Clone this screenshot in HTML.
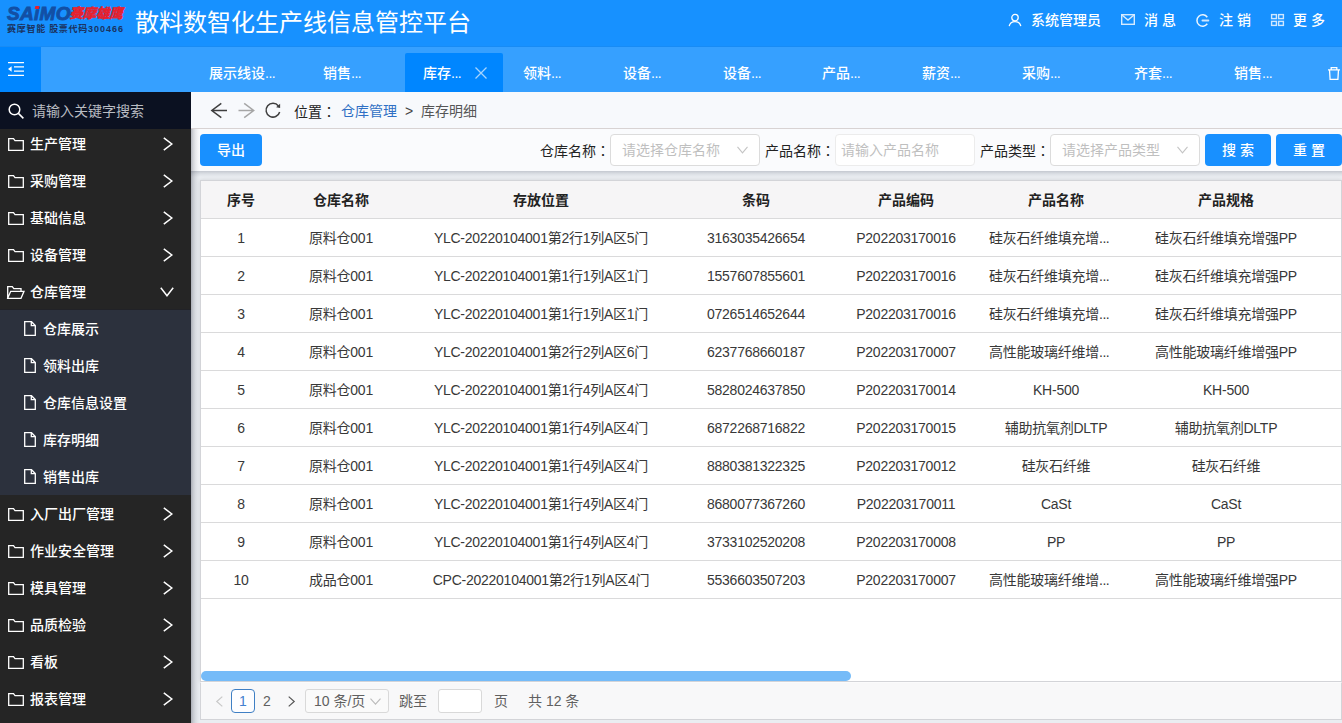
<!DOCTYPE html>
<html lang="zh-CN"><head><meta charset="utf-8"><title>散料数智化生产线信息管控平台</title>
<style>
*{box-sizing:border-box;margin:0;padding:0}
html,body{width:1342px;height:723px;overflow:hidden;background:#eaedf1;font-family:"Liberation Sans","Noto Sans CJK SC",sans-serif;font-size:14px;color:#222}
.abs{position:absolute}
body>div{position:absolute}
svg{position:absolute;overflow:visible}
.t{position:absolute;white-space:nowrap;line-height:20px;height:20px}
/* header */
#hdr{left:0;top:0;width:1342px;height:46px;background:#1791ff}
#hdr #title{left:135px;top:5.500px;font-size:24px;line-height:34px;height:34px;color:#fff}
#hdr .t{color:#fff;top:10px}
/* tab bar */
#tabs{left:0;top:46px;width:1342px;height:46px;background:#36a0ff;box-shadow:inset 0 1px 0 #188bf4}
#tog{left:0;top:1px;width:41px;height:45px;background:#0086ff;position:absolute}
#tabs .t{color:#fff;top:17px}
#act{position:absolute;left:405px;top:7px;width:98px;height:39px;background:#0086ff;border-radius:2px 2px 0 0}
/* sidebar */
#side{left:0;top:92px;width:191px;height:631px;background:#252525;overflow:hidden}
#sub{position:absolute;left:0;top:217px;width:191px;height:186px;background:#2c313d;border-top:1px solid #212227}
#srch{position:absolute;left:0;top:0;width:191px;height:37px;background:#0c1421}
#side .t{color:#fff}
#side .m{left:30px}
#side .s{left:43px}
/* main */
#crumb{left:191px;top:92px;width:1151px;height:37px;background:#f7f9fc;border-bottom:1px solid #d8d3d3}
#bar{left:191px;top:129px;width:1151px;height:42px;background:#fafbfd}
.btn{position:absolute;background:#1890ff;color:#fff;border-radius:4px;height:32px;line-height:32px;text-align:center;top:5px;white-space:nowrap}
.sel{position:absolute;top:5px;height:32px;background:#fff;border:1px solid #dcdcdc;border-radius:4px;color:#bfbfbf;line-height:30px;white-space:nowrap}
/* table */
.tbl{left:200px;top:180px;width:1142px;height:502px;background:#fff;border:1px solid #d3d4d8;position:absolute;box-shadow:0 0 4px rgba(0,0,0,.1)}
.thead{position:absolute;left:0;top:0;width:1140px;height:38px;background:#f6f5f6;border-bottom:1px solid #dadadb}
.th{position:absolute;top:0;height:38px;line-height:39px;text-align:center;font-weight:bold;color:#222;white-space:nowrap}
.tr{position:absolute;left:0;width:1140px;height:38px;border-bottom:1px solid #dadadb}
.td{position:absolute;top:0;height:38px;line-height:39px;text-align:center;color:#383838;white-space:nowrap}
/* footer */
#sb{left:201px;top:671px;width:650px;height:10px;border-radius:5px;background:#75bbf8}
#pg{left:200px;top:682px;width:1142px;height:38px;background:#f8f8f9;border:1px solid #d3d4d8;border-top-color:#fbfbfc}
#pg .t{top:8px;color:#606060}
.tc{font-family:"Noto Sans CJK TC","Noto Sans CJK SC",sans-serif}
.td{letter-spacing:-0.25px}
#hdr .t,#tabs .t,#side .t,.btn{font-weight:500}
#srch{background:#0b1121}
#hdr #title,#srch .t{font-weight:400}
.d{letter-spacing:-0.5px}

</style></head>
<body>
<div id="hdr">
  <div class="t" id="logo1" style="left:7px;top:3.700px;height:20px;line-height:20px;font-size:19px;font-weight:bold;font-style:italic;color:#124fa5;-webkit-text-stroke:0.9px #124fa5;letter-spacing:0.3px">SAiMO</div><div id="idot" style="position:absolute;left:35.200px;top:6px;width:4px;height:3.400px;background:#e8202c;transform:skewX(-12deg)"></div>
  <div class="t" id="logo2" style="left:69.500px;top:5px;height:18px;line-height:18px;font-size:13.400px;font-weight:900;font-style:italic;color:#e8202c;-webkit-text-stroke:0.4px #e8202c;letter-spacing:-0.1px">赛摩雄鹰</div>
  <div class="t" id="logo3" style="left:7px;top:23px;height:24px;line-height:24px;font-size:18px;font-weight:bold;color:#1b3360;letter-spacing:1.450px;transform:scale(.5);transform-origin:0 0">赛摩智能 股票代码<span style="letter-spacing:2px">300466</span></div>
  <div class="t" id="title">散料数智化生产线信息管控平台</div>
  <svg style="left:1008px;top:13px" width="14" height="14" viewBox="0 0 14 14" fill="none" stroke="#fff" stroke-width="1.3"><circle cx="7" cy="4.6" r="3.2"/><path d="M1.2 13.2c.6-3 2.9-4.6 5.800-4.600s5.200 1.600 5.800 4.600"/></svg>
  <div class="t" style="left:1031px">系统管理员</div>
  <svg style="left:1121px;top:14px" width="14" height="11" viewBox="0 0 14 11" fill="none" stroke="#d6ebff" stroke-width="1.400"><rect x=".7" y=".7" width="12.600" height="9.600"/><path d="M1 1l6 5 6-5"/></svg>
  <div class="t" style="left:1144px">消 息</div>
  <svg style="left:1196px;top:13.500px" width="13" height="13" viewBox="0 0 13 13" fill="none" stroke="#eaf5ff" stroke-width="1.500"><path d="M11.300 3.200a5.700 5.700 0 1 0 0 6.600"/><path d="M6.500 6.500h5.800" stroke="#cfe7ff" stroke-width="2" stroke-linecap="round"/></svg>
  <div class="t" style="left:1219px">注 销</div>
  <svg style="left:1271px;top:14px" width="13" height="12" viewBox="0 0 13 12" fill="none" stroke="#cfe7ff" stroke-width="1.400"><rect x=".6" y=".6" width="4.800" height="4"/><rect x="7.600" y=".6" width="4.800" height="4"/><rect x=".6" y="7.400" width="4.800" height="4"/><rect x="7.600" y="7.400" width="4.800" height="4"/></svg>
  <div class="t" style="left:1293px">更 多</div>
</div>
<div id="tabs">
  <div id="tog"><svg style="left:8px;top:15px" width="16" height="14" viewBox="0 0 16 14" fill="none" stroke="#fff" stroke-width="1.300"><path d="M0 .7h16M6 4.900h10M6 9.100h10M0 13.300h16"/><path d="M3.600 4.200v5.600L0 7z" fill="#fff" stroke="none"/></svg></div>
  <div id="act"></div>
  <div class="t" style="left:209px">展示线设<span class="d">...</span></div>
  <div class="t" style="left:323px">销售<span class="d">...</span></div>
  <div class="t" style="left:423px">库存<span class="d">...</span></div>
  <svg style="left:475px;top:21px" width="12" height="12" viewBox="0 0 12 12" fill="none" stroke="#a6d4ff" stroke-width="1.300"><path d="M.5.500l11 11M11.500.500l-11 11"/></svg>
  <div class="t" style="left:523px">领料<span class="d">...</span></div>
  <div class="t" style="left:623px">设备<span class="d">...</span></div>
  <div class="t" style="left:723px">设备<span class="d">...</span></div>
  <div class="t" style="left:822px">产品<span class="d">...</span></div>
  <div class="t" style="left:922px">薪资<span class="d">...</span></div>
  <div class="t" style="left:1022px">采购<span class="d">...</span></div>
  <div class="t" style="left:1134px">齐套<span class="d">...</span></div>
  <div class="t" style="left:1234px">销售<span class="d">...</span></div>
  <svg style="left:1328px;top:21px" width="12" height="13" viewBox="0 0 12 13" fill="none" stroke="#fff" stroke-width="1.300"><path d="M0 2.800h12M3.200 2.800v-2.100h5.600v2.100M1.500 2.800l.6 9.500h7.800l.6-9.500"/></svg>
</div>
<div id="side">
<div id="sub"></div>
<svg style="left:8px;top:46px" width="16" height="13" viewBox="0 0 16 13" fill="none" stroke="#fff" stroke-width="1.300"><path d="M.7 12.300v-11.600h4.800l1.500 2h8.300v9.600z"/></svg>
<svg style="left:163px;top:45px" width="10" height="14" viewBox="0 0 10 14" fill="none" stroke="#fff" stroke-width="1.500"><path d="M.8.800l8 6.200-8 6.200"/></svg>
<div class="t m" style="top:42px">生产管理</div>
<svg style="left:8px;top:83px" width="16" height="13" viewBox="0 0 16 13" fill="none" stroke="#fff" stroke-width="1.300"><path d="M.7 12.300v-11.600h4.800l1.500 2h8.300v9.600z"/></svg>
<svg style="left:163px;top:82px" width="10" height="14" viewBox="0 0 10 14" fill="none" stroke="#fff" stroke-width="1.500"><path d="M.8.800l8 6.200-8 6.200"/></svg>
<div class="t m" style="top:79px">采购管理</div>
<svg style="left:8px;top:120px" width="16" height="13" viewBox="0 0 16 13" fill="none" stroke="#fff" stroke-width="1.300"><path d="M.7 12.300v-11.600h4.800l1.500 2h8.300v9.600z"/></svg>
<svg style="left:163px;top:119px" width="10" height="14" viewBox="0 0 10 14" fill="none" stroke="#fff" stroke-width="1.500"><path d="M.8.800l8 6.200-8 6.200"/></svg>
<div class="t m" style="top:116px">基础信息</div>
<svg style="left:8px;top:157px" width="16" height="13" viewBox="0 0 16 13" fill="none" stroke="#fff" stroke-width="1.300"><path d="M.7 12.300v-11.600h4.800l1.500 2h8.300v9.600z"/></svg>
<svg style="left:163px;top:156px" width="10" height="14" viewBox="0 0 10 14" fill="none" stroke="#fff" stroke-width="1.500"><path d="M.8.800l8 6.200-8 6.200"/></svg>
<div class="t m" style="top:153px">设备管理</div>
<svg style="left:7px;top:194px" width="18" height="13" viewBox="0 0 18 13" fill="none" stroke="#fff" stroke-width="1.300"><path d="M.7 12.300v-11.600h4.600l1.500 2h7.200v2.600M.7 12.300l3-7h13.300l-3 7z"/></svg>
<svg style="left:160px;top:195px" width="14" height="10" viewBox="0 0 14 10" fill="none" stroke="#fff" stroke-width="1.500"><path d="M.8.800l6.200 8 6.200-8"/></svg>
<div class="t m" style="top:190px">仓库管理</div>
<svg style="left:24px;top:229px" width="12" height="15" viewBox="0 0 12 15" fill="none" stroke="#fff" stroke-width="1.300"><path d="M.7.700h6.800l3.800 3.800v9.800h-10.600z"/><path d="M7.300.900v3.800h3.800"/></svg>
<div class="t s" style="top:227px">仓库展示</div>
<svg style="left:24px;top:266px" width="12" height="15" viewBox="0 0 12 15" fill="none" stroke="#fff" stroke-width="1.300"><path d="M.7.700h6.800l3.800 3.800v9.800h-10.600z"/><path d="M7.300.900v3.800h3.800"/></svg>
<div class="t s" style="top:264px">领料出库</div>
<svg style="left:24px;top:303px" width="12" height="15" viewBox="0 0 12 15" fill="none" stroke="#fff" stroke-width="1.300"><path d="M.7.700h6.800l3.800 3.800v9.800h-10.600z"/><path d="M7.300.900v3.800h3.800"/></svg>
<div class="t s" style="top:301px">仓库信息设置</div>
<svg style="left:24px;top:340px" width="12" height="15" viewBox="0 0 12 15" fill="none" stroke="#fff" stroke-width="1.300"><path d="M.7.700h6.800l3.800 3.800v9.800h-10.600z"/><path d="M7.300.900v3.800h3.800"/></svg>
<div class="t s" style="top:338px">库存明细</div>
<svg style="left:24px;top:377px" width="12" height="15" viewBox="0 0 12 15" fill="none" stroke="#fff" stroke-width="1.300"><path d="M.7.700h6.800l3.800 3.800v9.800h-10.600z"/><path d="M7.300.900v3.800h3.800"/></svg>
<div class="t s" style="top:375px">销售出库</div>
<svg style="left:8px;top:416px" width="16" height="13" viewBox="0 0 16 13" fill="none" stroke="#fff" stroke-width="1.300"><path d="M.7 12.300v-11.600h4.800l1.500 2h8.300v9.600z"/></svg>
<svg style="left:163px;top:415px" width="10" height="14" viewBox="0 0 10 14" fill="none" stroke="#fff" stroke-width="1.500"><path d="M.8.800l8 6.200-8 6.200"/></svg>
<div class="t m" style="top:412px">入厂出厂管理</div>
<svg style="left:8px;top:453px" width="16" height="13" viewBox="0 0 16 13" fill="none" stroke="#fff" stroke-width="1.300"><path d="M.7 12.300v-11.600h4.800l1.500 2h8.300v9.600z"/></svg>
<svg style="left:163px;top:452px" width="10" height="14" viewBox="0 0 10 14" fill="none" stroke="#fff" stroke-width="1.500"><path d="M.8.800l8 6.200-8 6.200"/></svg>
<div class="t m" style="top:449px">作业安全管理</div>
<svg style="left:8px;top:490px" width="16" height="13" viewBox="0 0 16 13" fill="none" stroke="#fff" stroke-width="1.300"><path d="M.7 12.300v-11.600h4.800l1.500 2h8.300v9.600z"/></svg>
<svg style="left:163px;top:489px" width="10" height="14" viewBox="0 0 10 14" fill="none" stroke="#fff" stroke-width="1.500"><path d="M.8.800l8 6.200-8 6.200"/></svg>
<div class="t m" style="top:486px">模具管理</div>
<svg style="left:8px;top:527px" width="16" height="13" viewBox="0 0 16 13" fill="none" stroke="#fff" stroke-width="1.300"><path d="M.7 12.300v-11.600h4.800l1.500 2h8.300v9.600z"/></svg>
<svg style="left:163px;top:526px" width="10" height="14" viewBox="0 0 10 14" fill="none" stroke="#fff" stroke-width="1.500"><path d="M.8.800l8 6.200-8 6.200"/></svg>
<div class="t m" style="top:523px">品质检验</div>
<svg style="left:8px;top:564px" width="16" height="13" viewBox="0 0 16 13" fill="none" stroke="#fff" stroke-width="1.300"><path d="M.7 12.300v-11.600h4.800l1.500 2h8.300v9.600z"/></svg>
<svg style="left:163px;top:563px" width="10" height="14" viewBox="0 0 10 14" fill="none" stroke="#fff" stroke-width="1.500"><path d="M.8.800l8 6.200-8 6.200"/></svg>
<div class="t m" style="top:560px">看板</div>
<svg style="left:8px;top:601px" width="16" height="13" viewBox="0 0 16 13" fill="none" stroke="#fff" stroke-width="1.300"><path d="M.7 12.300v-11.600h4.800l1.500 2h8.300v9.600z"/></svg>
<svg style="left:163px;top:600px" width="10" height="14" viewBox="0 0 10 14" fill="none" stroke="#fff" stroke-width="1.500"><path d="M.8.800l8 6.200-8 6.200"/></svg>
<div class="t m" style="top:597px">报表管理</div>
<div id="srch"><svg style="left:8px;top:11px" width="16" height="16" viewBox="0 0 16 16" fill="none" stroke="#fff" stroke-width="1.500"><circle cx="6.500" cy="6.500" r="5.300"/><path d="M10.400 10.400l5 5"/></svg><div class="t" style="left:32px;top:9px;color:#b9bcc2">请输入关键字搜索</div></div>
</div>
<div id="crumb">
  <svg style="left:19.800px;top:11px" width="17" height="15" viewBox="0 0 17 15" fill="none" stroke="#3e3e3e" stroke-width="1.500"><path d="M16 7.500h-15.200M10.300 .4l-9.500 7.100 9.500 7.100"/></svg>
  <svg style="left:47.300px;top:11px" width="17" height="15" viewBox="0 0 17 15" fill="none" stroke="#a6a6a6" stroke-width="1.500"><path d="M.5 7.500h15.200M6.200 .4l9.500 7.100-9.500 7.100"/></svg>
  <svg style="left:74px;top:10px" width="16" height="16" viewBox="0 0 16 16" fill="none" stroke="#3e3e3e" stroke-width="1.500"><path d="M13.440 3.950A6.900 6.900 0 1 0 14.660 9.990"/><path d="M15.100 1.800v4.300l-4-.8z" fill="#3e3e3e" stroke="none"/></svg>
  <div class="t" style="left:103px;top:9px;color:#222">位置<span class="tc" lang="zh-TW">：</span></div>
  <div class="t" style="left:150px;top:9px;color:#2f6fc4">仓库管理</div>
  <div class="t" style="left:214px;top:9px;color:#444">&gt;</div>
  <div class="t" style="left:230px;top:9px;color:#555">库存明细</div>
</div>
<div id="bar">
  <div class="btn" style="left:9px;width:62px">导出</div>
  <div class="t" style="left:349px;top:11px">仓库名称<span class="tc" lang="zh-TW">：</span></div>
  <div class="sel" style="left:419px;width:150px;padding-left:11px">请选择仓库名称<svg style="left:126px;top:11px" width="11" height="8" viewBox="0 0 11 8" fill="none" stroke="#c4c4c4" stroke-width="1.100"><path d="M.5.800l5 6 5-6"/></svg></div>
  <div class="t" style="left:574px;top:11px">产品名称<span class="tc" lang="zh-TW">：</span></div>
  <div class="sel" style="left:644px;width:140px;padding-left:5px;border-color:#ececec">请输入产品名称</div>
  <div class="t" style="left:789px;top:11px">产品类型<span class="tc" lang="zh-TW">：</span></div>
  <div class="sel" style="left:859px;width:150px;padding-left:11px">请选择产品类型<svg style="left:126px;top:11px" width="11" height="8" viewBox="0 0 11 8" fill="none" stroke="#c4c4c4" stroke-width="1.100"><path d="M.5.800l5 6 5-6"/></svg></div>
  <div class="btn" style="left:1014px;width:66px">搜 索</div>
  <div class="btn" style="left:1085px;width:66px">重 置</div>
</div>
<div id="shadowh" style="left:191px;top:171px;width:1151px;height:6px;background:linear-gradient(180deg,rgba(60,70,90,.22),rgba(60,70,90,.08) 50%,rgba(60,70,90,0))"></div>
<div class="tbl">
<div class="thead">
<div class="th" style="left:0px;width:80px">序号</div>
<div class="th" style="left:80px;width:120px">仓库名称</div>
<div class="th" style="left:200px;width:280px">存放位置</div>
<div class="th" style="left:480px;width:150px">条码</div>
<div class="th" style="left:630px;width:150px">产品编码</div>
<div class="th" style="left:780px;width:150px">产品名称</div>
<div class="th" style="left:930px;width:190px">产品规格</div>
</div>
<div class="tr" style="top:38px">
<div class="td c0" style="left:0px;width:80px">1</div>
<div class="td c1" style="left:80px;width:120px">原料仓001</div>
<div class="td c2" style="left:200px;width:280px">YLC-20220104001第2行1列A区5门</div>
<div class="td c3" style="left:480px;width:150px">3163035426654</div>
<div class="td c4" style="left:630px;width:150px">P202203170016</div>
<div class="td c5" style="left:780px;width:150px;text-align:left;padding-left:8px">硅灰石纤维填充增<span class="d">...</span></div>
<div class="td c6" style="left:930px;width:190px">硅灰石纤维填充增强PP</div>
</div>
<div class="tr" style="top:76px">
<div class="td c0" style="left:0px;width:80px">2</div>
<div class="td c1" style="left:80px;width:120px">原料仓001</div>
<div class="td c2" style="left:200px;width:280px">YLC-20220104001第1行1列A区1门</div>
<div class="td c3" style="left:480px;width:150px">1557607855601</div>
<div class="td c4" style="left:630px;width:150px">P202203170016</div>
<div class="td c5" style="left:780px;width:150px;text-align:left;padding-left:8px">硅灰石纤维填充增<span class="d">...</span></div>
<div class="td c6" style="left:930px;width:190px">硅灰石纤维填充增强PP</div>
</div>
<div class="tr" style="top:114px">
<div class="td c0" style="left:0px;width:80px">3</div>
<div class="td c1" style="left:80px;width:120px">原料仓001</div>
<div class="td c2" style="left:200px;width:280px">YLC-20220104001第1行1列A区1门</div>
<div class="td c3" style="left:480px;width:150px">0726514652644</div>
<div class="td c4" style="left:630px;width:150px">P202203170016</div>
<div class="td c5" style="left:780px;width:150px;text-align:left;padding-left:8px">硅灰石纤维填充增<span class="d">...</span></div>
<div class="td c6" style="left:930px;width:190px">硅灰石纤维填充增强PP</div>
</div>
<div class="tr" style="top:152px">
<div class="td c0" style="left:0px;width:80px">4</div>
<div class="td c1" style="left:80px;width:120px">原料仓001</div>
<div class="td c2" style="left:200px;width:280px">YLC-20220104001第2行2列A区6门</div>
<div class="td c3" style="left:480px;width:150px">6237768660187</div>
<div class="td c4" style="left:630px;width:150px">P202203170007</div>
<div class="td c5" style="left:780px;width:150px;text-align:left;padding-left:8px">高性能玻璃纤维增<span class="d">...</span></div>
<div class="td c6" style="left:930px;width:190px">高性能玻璃纤维增强PP</div>
</div>
<div class="tr" style="top:190px">
<div class="td c0" style="left:0px;width:80px">5</div>
<div class="td c1" style="left:80px;width:120px">原料仓001</div>
<div class="td c2" style="left:200px;width:280px">YLC-20220104001第1行4列A区4门</div>
<div class="td c3" style="left:480px;width:150px">5828024637850</div>
<div class="td c4" style="left:630px;width:150px">P202203170014</div>
<div class="td c5" style="left:780px;width:150px">KH-500</div>
<div class="td c6" style="left:930px;width:190px">KH-500</div>
</div>
<div class="tr" style="top:228px">
<div class="td c0" style="left:0px;width:80px">6</div>
<div class="td c1" style="left:80px;width:120px">原料仓001</div>
<div class="td c2" style="left:200px;width:280px">YLC-20220104001第1行4列A区4门</div>
<div class="td c3" style="left:480px;width:150px">6872268716822</div>
<div class="td c4" style="left:630px;width:150px">P202203170015</div>
<div class="td c5" style="left:780px;width:150px">辅助抗氧剂DLTP</div>
<div class="td c6" style="left:930px;width:190px">辅助抗氧剂DLTP</div>
</div>
<div class="tr" style="top:266px">
<div class="td c0" style="left:0px;width:80px">7</div>
<div class="td c1" style="left:80px;width:120px">原料仓001</div>
<div class="td c2" style="left:200px;width:280px">YLC-20220104001第1行4列A区4门</div>
<div class="td c3" style="left:480px;width:150px">8880381322325</div>
<div class="td c4" style="left:630px;width:150px">P202203170012</div>
<div class="td c5" style="left:780px;width:150px">硅灰石纤维</div>
<div class="td c6" style="left:930px;width:190px">硅灰石纤维</div>
</div>
<div class="tr" style="top:304px">
<div class="td c0" style="left:0px;width:80px">8</div>
<div class="td c1" style="left:80px;width:120px">原料仓001</div>
<div class="td c2" style="left:200px;width:280px">YLC-20220104001第1行4列A区4门</div>
<div class="td c3" style="left:480px;width:150px">8680077367260</div>
<div class="td c4" style="left:630px;width:150px">P202203170011</div>
<div class="td c5" style="left:780px;width:150px">CaSt</div>
<div class="td c6" style="left:930px;width:190px">CaSt</div>
</div>
<div class="tr" style="top:342px">
<div class="td c0" style="left:0px;width:80px">9</div>
<div class="td c1" style="left:80px;width:120px">原料仓001</div>
<div class="td c2" style="left:200px;width:280px">YLC-20220104001第1行4列A区4门</div>
<div class="td c3" style="left:480px;width:150px">3733102520208</div>
<div class="td c4" style="left:630px;width:150px">P202203170008</div>
<div class="td c5" style="left:780px;width:150px">PP</div>
<div class="td c6" style="left:930px;width:190px">PP</div>
</div>
<div class="tr" style="top:380px">
<div class="td c0" style="left:0px;width:80px">10</div>
<div class="td c1" style="left:80px;width:120px">成品仓001</div>
<div class="td c2" style="left:200px;width:280px">CPC-20220104001第2行1列A区4门</div>
<div class="td c3" style="left:480px;width:150px">5536603507203</div>
<div class="td c4" style="left:630px;width:150px">P202203170007</div>
<div class="td c5" style="left:780px;width:150px;text-align:left;padding-left:8px">高性能玻璃纤维增<span class="d">...</span></div>
<div class="td c6" style="left:930px;width:190px">高性能玻璃纤维增强PP</div>
</div>
</div>
<div id="sb"></div>
<div id="pg">
  <svg style="left:15px;top:13px" width="7" height="11" viewBox="0 0 7 11" fill="none" stroke="#c8c8c8" stroke-width="1.200"><path d="M6.300.600l-5.500 4.900 5.500 4.900"/></svg>
  <div style="position:absolute;left:30px;top:6px;width:24px;height:24px;border:1px solid #3f7fc4;border-radius:4px;background:#fdfdff;color:#4280d0;text-align:center;line-height:22px">1</div>
  <div class="t" style="left:62px">2</div>
  <svg style="left:87px;top:13px" width="7" height="11" viewBox="0 0 7 11" fill="none" stroke="#555" stroke-width="1.200"><path d="M.7.600l5.500 4.900-5.500 4.900"/></svg>
  <div style="position:absolute;left:104px;top:6px;width:84px;height:24px;border:1px solid #d9d9d9;border-radius:3px;background:#fafafa;color:#606060;line-height:22px;padding-left:8px;white-space:nowrap">10 条/页<svg style="left:64px;top:8px" width="11" height="7" viewBox="0 0 11 7" fill="none" stroke="#bbb" stroke-width="1.100"><path d="M.5.600l5 5.500 5-5.500"/></svg></div>
  <div class="t" style="left:198px">跳至</div>
  <div style="position:absolute;left:237px;top:6px;width:44px;height:24px;border:1px solid #d9d9d9;border-radius:3px;background:#fff"></div>
  <div class="t" style="left:293px">页</div>
  <div class="t" style="left:327px">共 12 条</div>
</div>
<div id="shadowv" style="left:191px;top:129px;width:9px;height:594px;background:linear-gradient(90deg,rgba(40,45,60,.33),rgba(40,45,60,.26) 11%,rgba(40,45,60,.17) 28%,rgba(40,45,60,.09) 50%,rgba(40,45,60,.03) 75%,rgba(40,45,60,0));z-index:5"></div>
</body></html>
